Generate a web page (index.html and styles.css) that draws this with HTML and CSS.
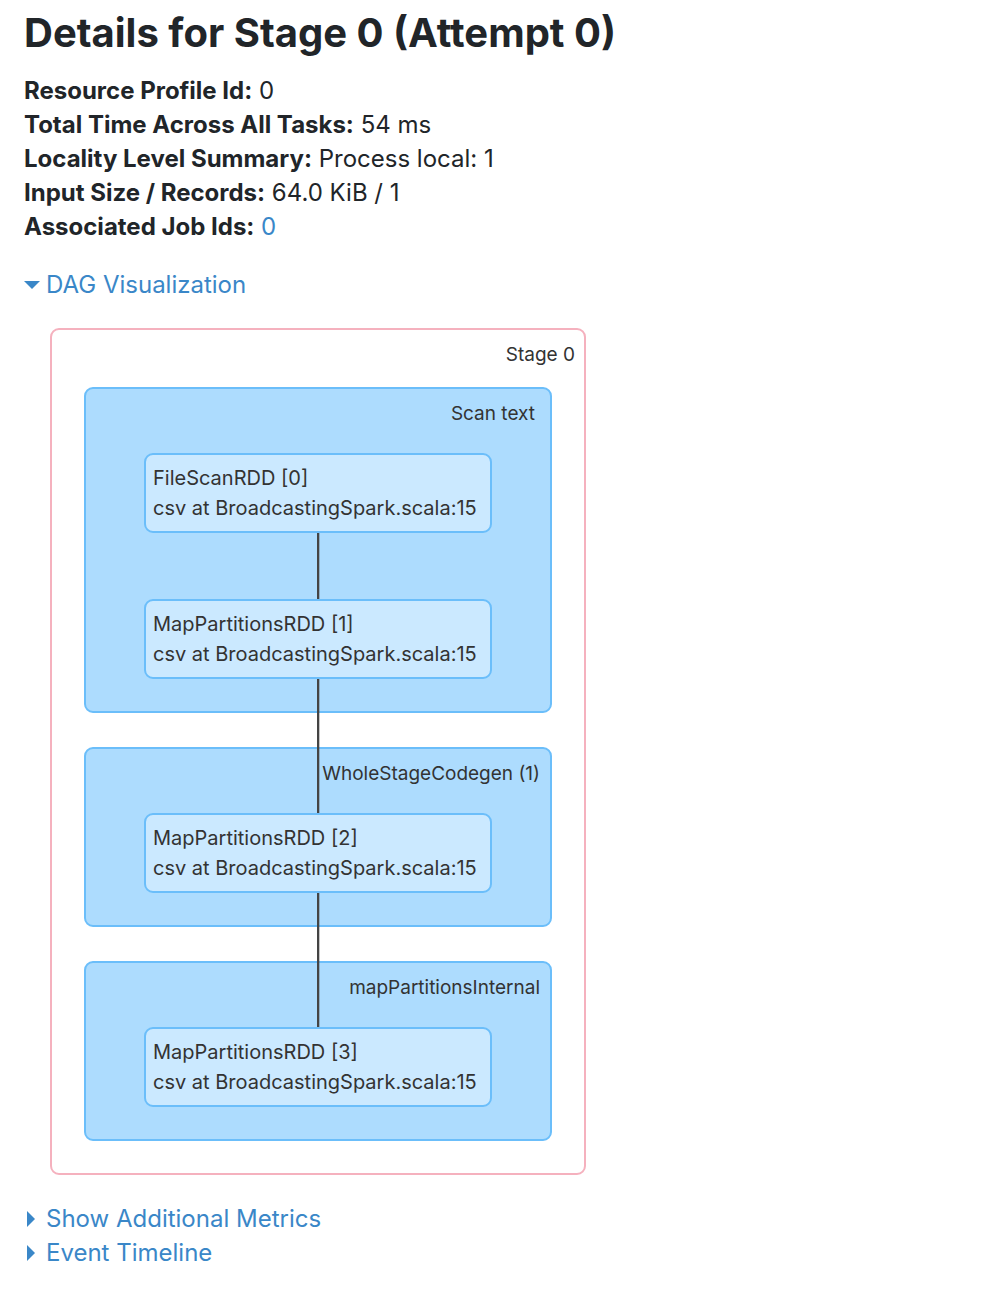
FILE: index.html
```
<!DOCTYPE html>
<html lang="en">
<head>
<meta charset="utf-8">
<meta name="viewport" content="width=device-width, initial-scale=1">
<title>Details for Stage 0 (Attempt 0)</title>
<link rel="stylesheet" href="styles.css">
</head>
<body>
<main class="page">
  <h1 class="title">Details for Stage 0 (Attempt 0)</h1>
  <ul class="facts">
    <li><strong>Resource Profile Id:</strong> 0</li>
    <li><strong>Total Time Across All Tasks:</strong> 54 ms</li>
    <li><strong>Locality Level Summary:</strong> Process local: 1</li>
    <li><strong>Input Size / Records:</strong> 64.0 KiB / 1</li>
    <li><strong>Associated Job Ids:</strong> <a href="#job-0">0</a></li>
  </ul>

  <details class="section dag" open>
    <summary>DAG Visualization</summary>
    <div class="stage">
      <div class="label">Stage 0</div>
      <div class="clusters">
        <section class="cluster">
          <div class="label label-inset">Scan text</div>
          <div class="nodes">
            <div class="node">FileScanRDD [0]<br>csv at BroadcastingSpark.scala:15</div>
            <div class="node linked">MapPartitionsRDD [1]<br>csv at BroadcastingSpark.scala:15</div>
          </div>
        </section>
        <section class="cluster">
          <div class="label">WholeStageCodegen (1)</div>
          <div class="nodes">
            <div class="node linked linked-across">MapPartitionsRDD [2]<br>csv at BroadcastingSpark.scala:15</div>
          </div>
        </section>
        <section class="cluster">
          <div class="label">mapPartitionsInternal</div>
          <div class="nodes">
            <div class="node linked linked-across">MapPartitionsRDD [3]<br>csv at BroadcastingSpark.scala:15</div>
          </div>
        </section>
      </div>
    </div>
  </details>

  <details class="section">
    <summary>Show Additional Metrics</summary>
  </details>
  <details class="section">
    <summary>Event Timeline</summary>
  </details>
</main>
</body>
</html>
```
FILE: styles.css
```
* {
  box-sizing: border-box;
}

body {
  margin: 0;
  background: #fff;
  color: #212529;
  font-family: Inter, "Liberation Sans", sans-serif;
  font-size: 24px;
  line-height: 34px;
}

a,
summary {
  color: #3a87c8;
  text-decoration: none;
}

.page {
  padding: 8px 24px 20px;
}

.title {
  margin: 0 0 16px;
  font-size: 40px;
  line-height: 50px;
  font-weight: 700;
}

.facts {
  margin: 0 0 24px;
  padding: 0;
  list-style: none;
}

.facts strong {
  font-weight: 700;
}

.section summary {
  display: flex;
  align-items: center;
  width: fit-content;
  list-style: none;
  cursor: pointer;
}

/* Disclosure caret: points right when closed, down when open */
.section summary::before {
  content: "";
  width: 8px;
  height: 16px;
  margin: 0 11px 0 3px;
  background: currentColor;
  clip-path: polygon(0 0, 100% 50%, 0 100%);
}

.section[open] summary::before {
  width: 16px;
  height: 8px;
  margin: 0 6px 0 0;
  clip-path: polygon(0 0, 100% 0, 50% 100%);
}

.dag {
  margin-bottom: 27px;
}

.stage {
  width: fit-content;
  margin: 26px 0 0 26px;
  padding: 0 32px 32px;
  border: 2px solid #f5b1be;
  border-radius: 9px;
  color: #333;
  font-size: 20px;
  line-height: 30px;
}

.label {
  padding: 10px 10px 0 0;
  font-size: 19px;
  text-align: right;
}

.label-inset {
  padding-right: 15px;
}

.stage > .label {
  margin: 0 -32px 17px 0;
  padding-right: 9px;
}

.clusters {
  display: grid;
  gap: 34px;
}

.cluster {
  padding-bottom: 32px;
  border: 2px solid #6bbefa;
  border-radius: 9px;
  background: #addcfe;
}

.nodes {
  display: grid;
  gap: 66px;
  padding: 24px 58px 0;
}

.node {
  position: relative;
  width: 348px;
  padding: 8px 7px;
  border: 2px solid #6bbefa;
  border-radius: 9px;
  background: #cbe9ff;
  white-space: nowrap;
}

/* Edge from the node above */
.linked::before {
  content: "";
  position: absolute;
  bottom: calc(100% + 2px);
  left: calc(50% - 1px);
  width: 2px;
  height: 66px;
  background: #444;
  box-shadow: 1px 0 rgba(68, 68, 68, 0.3);
}

.linked-across::before {
  height: 134px;
}
```
